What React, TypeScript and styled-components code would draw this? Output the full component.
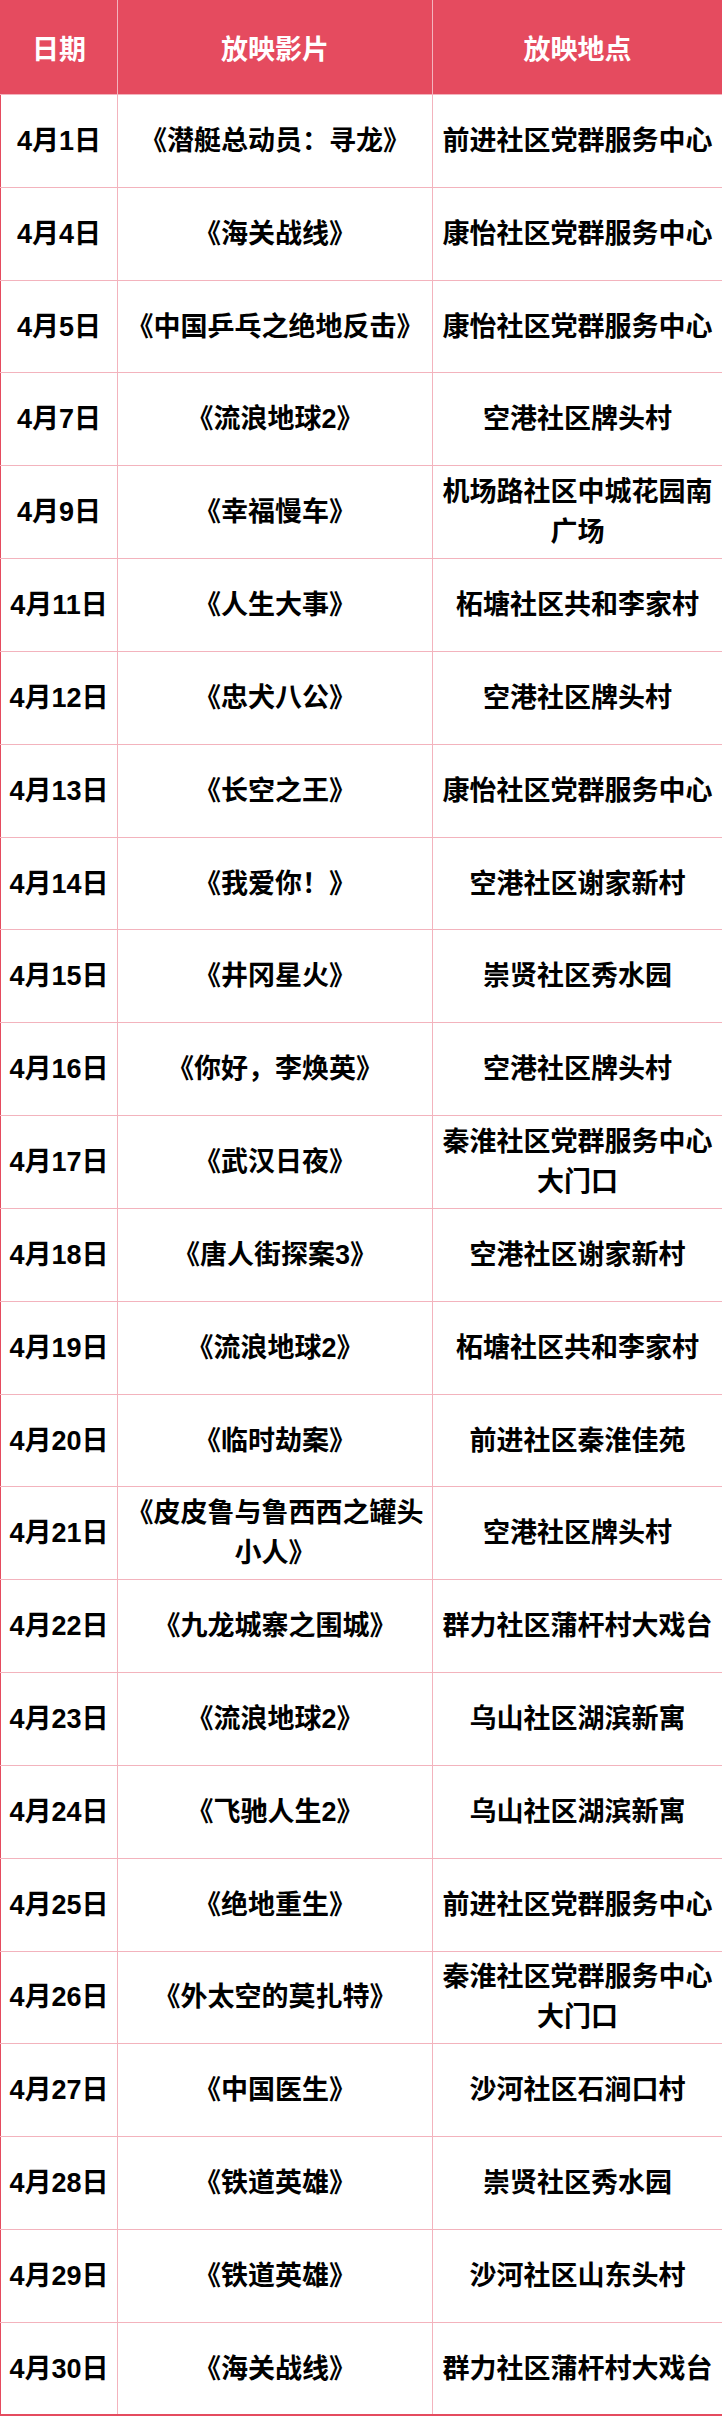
import styled, {createGlobalStyle} from "styled-components";

const schedule: [string, string, string][] = [
    ["4月1日", "《潜艇总动员：寻龙》", "前进社区党群服务中心"],
    ["4月4日", "《海关战线》", "康怡社区党群服务中心"],
    ["4月5日", "《中国乒乓之绝地反击》", "康怡社区党群服务中心"],
    ["4月7日", "《流浪地球2》", "空港社区牌头村"],
    ["4月9日", "《幸福慢车》", "机场路社区中城花园南广场"],
    ["4月11日", "《人生大事》", "柘塘社区共和李家村"],
    ["4月12日", "《忠犬八公》", "空港社区牌头村"],
    ["4月13日", "《长空之王》", "康怡社区党群服务中心"],
    ["4月14日", "《我爱你！》", "空港社区谢家新村"],
    ["4月15日", "《井冈星火》", "崇贤社区秀水园"],
    ["4月16日", "《你好，李焕英》", "空港社区牌头村"],
    ["4月17日", "《武汉日夜》", "秦淮社区党群服务中心大门口"],
    ["4月18日", "《唐人街探案3》", "空港社区谢家新村"],
    ["4月19日", "《流浪地球2》", "柘塘社区共和李家村"],
    ["4月20日", "《临时劫案》", "前进社区秦淮佳苑"],
    ["4月21日", "《皮皮鲁与鲁西西之罐头小人》", "空港社区牌头村"],
    ["4月22日", "《九龙城寨之围城》", "群力社区蒲杆村大戏台"],
    ["4月23日", "《流浪地球2》", "乌山社区湖滨新寓"],
    ["4月24日", "《飞驰人生2》", "乌山社区湖滨新寓"],
    ["4月25日", "《绝地重生》", "前进社区党群服务中心"],
    ["4月26日", "《外太空的莫扎特》", "秦淮社区党群服务中心大门口"],
    ["4月27日", "《中国医生》", "沙河社区石涧口村"],
    ["4月28日", "《铁道英雄》", "崇贤社区秀水园"],
    ["4月29日", "《铁道英雄》", "沙河社区山东头村"],
    ["4月30日", "《海关战线》", "群力社区蒲杆村大戏台"],
]

const GlobalStyle = createGlobalStyle`
  body {
    margin: 0;
    background: #fff;
    font-family: "Liberation Sans", "Noto Sans CJK SC", sans-serif;
  }
`

const Table = styled.table`
  width: 722px;
  border-collapse: collapse;
  table-layout: fixed;
  border-left: 1px solid #e54b5f;
  border-right: 1px solid #e54b5f;
  border-bottom: 2px solid #e54b5f;
`

const Col = styled.col<{ $w: number }>`
  width: ${p => p.$w}px;
`

const HeadCell = styled.th`
  height: 94px;
  padding: 0 4px;
  background: #e54b5f;
  color: #fff;
  font-size: 27px;
  font-weight: 700;
  text-align: center;
  border-right: 1px solid #f3b3bd;

  &:last-child {
    border-right: none;
  }
`

const Cell = styled.td`
  height: 92.84px;
  box-sizing: border-box;
  padding: 0 4px;
  color: #000;
  font-size: 27px;
  font-weight: 700;
  line-height: 40px;
  text-align: center;
  border-right: 1px solid #f3b3bd;
  border-top: 1px solid #f3b3bd;

  &:last-child {
    border-right: none;
  }
`

export default function App() {
    return <>
        <GlobalStyle/>
        <Table>
            <colgroup>
                <Col $w={117}/>
                <Col $w={315}/>
                <Col $w={290}/>
            </colgroup>
            <thead>
            <tr>
                <HeadCell>日期</HeadCell>
                <HeadCell>放映影片</HeadCell>
                <HeadCell>放映地点</HeadCell>
            </tr>
            </thead>
            <tbody>
            {schedule.map(([date, film, place]) => (
                <tr key={date}>
                    <Cell>{date}</Cell>
                    <Cell>{film}</Cell>
                    <Cell>{place}</Cell>
                </tr>
            ))}
            </tbody>
        </Table>
    </>
}
